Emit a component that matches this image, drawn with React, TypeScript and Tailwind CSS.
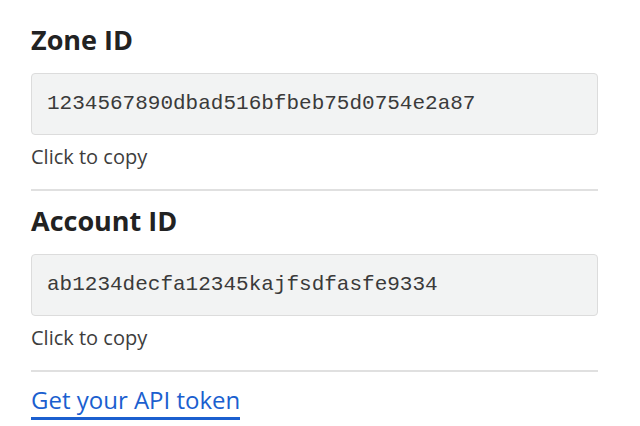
const IdField = ({ label, value }: { label: string; value: string }) => (
  <div>
    <h2 className="text-[27px] leading-[32px] font-bold text-[#222]">{label}</h2>
    <div className="mt-[17px] h-[62px] flex items-center px-[15px] rounded-[4px] border border-[#dcdcdc] bg-[#f2f3f3]">
      <span className="font-['Liberation_Mono',monospace] text-[21px] leading-[24px] text-[#3a3a3a]">{value}</span>
    </div>
    <p className="mt-[8px] text-[20px] leading-[28px] text-[#3d3d3d]">Click to copy</p>
    <div className="mt-[18px] border-t-2 border-[#e0e0e0]" />
  </div>
);

export default function App() {
  return (
    <div className="w-[640px] h-[426px] bg-white pl-[31px] pr-[42px] pt-[24px] font-['Open_Sans',sans-serif]">
      <IdField label="Zone ID" value="1234567890dbad516bfbeb75d0754e2a87" />
      <div className="mt-[14px]">
        <IdField label="Account ID" value="ab1234decfa12345kajfsdfasfe9334" />
      </div>
      <div className="mt-[13px]">
        <a href="#" className="inline-block text-[24px] leading-[30px] text-[#1b5fcf] pb-[2px] border-b-[3px] border-[#1b5fcf]">
          Get your API token
        </a>
      </div>
    </div>
  );
}
